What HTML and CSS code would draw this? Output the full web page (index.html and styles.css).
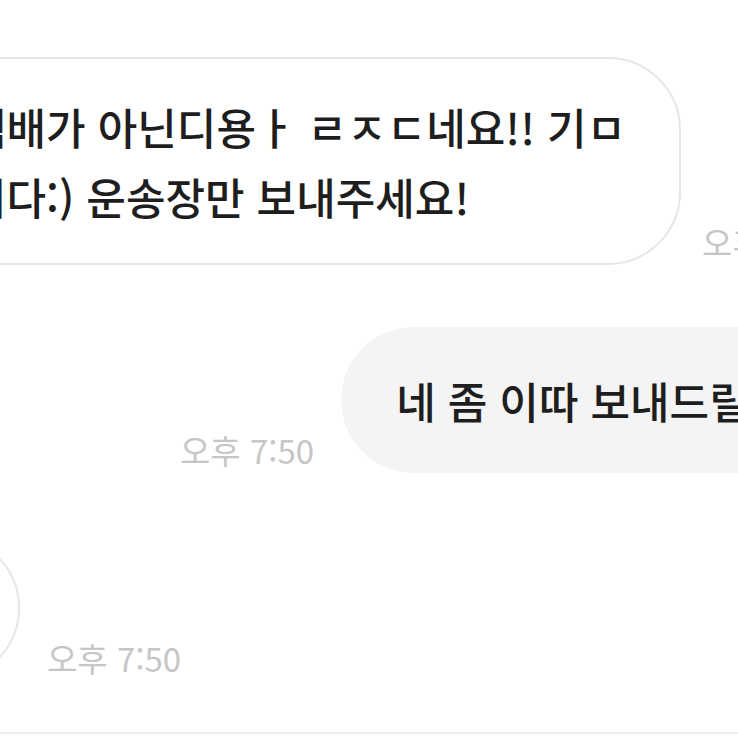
FILE: index.html
```html
<!DOCTYPE html>
<html lang="ko">

<head>
    <meta charset="UTF-8">
    <meta name="viewport" content="width=device-width, initial-scale=1.0">
    <title>채팅</title>
    <link rel="stylesheet" href="styles.css">
</head>

<body>
    <!-- Chat messages -->
    <main class="chat">
        <div class="row row-first">
            <div class="bubble bubble-in">택배가 아닌디용ㅏ ㄹㅈㄷ네요!! 기ㅁ<br>니다:) 운송장만 보내주세요!</div>
            <span class="time">오후 7:50</span>
        </div>

        <div class="row row-out">
            <span class="time">오후 7:50</span>
            <div class="bubble bubble-out">네 좀 이따 보내드릴게요</div>
        </div>

        <div class="row row-last">
            <div class="bubble-anchor">
                <div class="bubble bubble-in">감사합니다</div>
            </div>
            <span class="time">오후 7:50</span>
        </div>
    </main>

    <!-- Input bar edge -->
    <div class="input-bar"></div>
</body>

</html>
```

FILE: styles.css
```css
/* Base Styles */
* {
    margin: 0;
    padding: 0;
    box-sizing: border-box;
    font-family: 'Noto Sans CJK KR', 'Noto Sans', sans-serif;
}

html,
body {
    width: 738px;
    height: 738px;
    overflow: hidden;
}

body {
    background-color: #ffffff;
    color: #1e1e1e;
}

/* Chat */
.chat {
    display: flex;
    flex-direction: column;
    gap: 62px;
    padding-top: 57px;
}

.row {
    display: flex;
    align-items: flex-end;
    gap: 27px;
}

.row-first {
    margin-left: -90px;
    gap: 21px;
}

.row-out {
    padding-left: 180px;
}

.bubble {
    flex-shrink: 0;
    white-space: nowrap;
    font-size: 43px;
    font-weight: 500;
    line-height: 70px;
    padding: 38px 55px;
    border-radius: 73px;
}

.bubble-in {
    background-color: #ffffff;
    border: 2px solid #e6e6e6;
    padding-top: 36px;
    padding-bottom: 36px;
}

.row-first .bubble-in {
    padding-top: 32px;
    padding-bottom: 32px;
    padding-right: 53px;
}

.bubble-out {
    background-color: #f4f4f4;
}

.bubble-anchor {
    width: 20px;
    flex-shrink: 0;
    display: flex;
    justify-content: flex-end;
}

.time {
    flex-shrink: 0;
    font-size: 33px;
    line-height: 38px;
    color: #c6c6c6;
    padding-bottom: 4px;
    white-space: nowrap;
}

/* Input bar */
.input-bar {
    margin-top: 51px;
    border-top: 2px solid #eeeeee;
    height: 40px;
}
```
